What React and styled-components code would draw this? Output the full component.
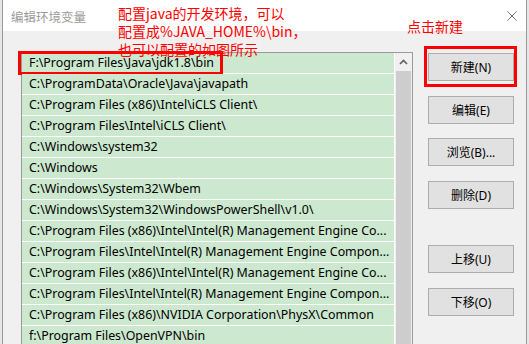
import styled, { createGlobalStyle } from 'styled-components'

const GlobalStyle = createGlobalStyle`
  html, body {
    margin: 0;
    padding: 0;
    background: #ececec;
    overflow: hidden;
  }
  body {
    font-family: 'Noto Sans', 'Noto Sans CJK SC', sans-serif;
  }
`

const paths = [
  'F:\\Program Files\\Java\\jdk1.8\\bin',
  'C:\\ProgramData\\Oracle\\Java\\javapath',
  'C:\\Program Files (x86)\\Intel\\iCLS Client\\',
  'C:\\Program Files\\Intel\\iCLS Client\\',
  'C:\\Windows\\system32',
  'C:\\Windows',
  'C:\\Windows\\System32\\Wbem',
  'C:\\Windows\\System32\\WindowsPowerShell\\v1.0\\',
  'C:\\Program Files (x86)\\Intel\\Intel(R) Management Engine Co...',
  'C:\\Program Files\\Intel\\Intel(R) Management Engine Compon...',
  'C:\\Program Files (x86)\\Intel\\Intel(R) Management Engine Co...',
  'C:\\Program Files\\Intel\\Intel(R) Management Engine Compon...',
  'C:\\Program Files (x86)\\NVIDIA Corporation\\PhysX\\Common',
  'f:\\Program Files\\OpenVPN\\bin',
]

const buttons = [
  { label: '新建(N)', marked: true },
  { label: '编辑(E)' },
  { label: '浏览(B)...' },
  { label: '删除(D)' },
  { label: '上移(U)', spaced: true },
  { label: '下移(O)' },
]

const App = () => {
  return (
    <>
      <GlobalStyle />
      <Desktop>
        <Strip $width={2} />
        <Dialog>
          <TitleBar>
            <Title>编辑环境变量</Title>
            <CloseIcon viewBox="0 0 10 10">
              <path d="M0.5 0.5 L9.5 9.5 M9.5 0.5 L0.5 9.5" />
            </CloseIcon>
          </TitleBar>
          <Body>
            <ListBox>
              <Rows>
                {paths.map((p, i) => (
                  <Row key={i} $marked={i === 0}>
                    {p}
                  </Row>
                ))}
              </Rows>
              <ScrollBar>
                <ScrollButton>
                  <svg width="9" height="6" viewBox="0 0 9 6">
                    <path d="M1 5 L4.5 1.5 L8 5" fill="none" stroke="#606060" strokeWidth="1.6" />
                  </svg>
                </ScrollButton>
                <Thumb />
              </ScrollBar>
            </ListBox>
            <ButtonColumn>
              {buttons.map((b) => (
                <Button key={b.label} $marked={b.marked} $spaced={b.spaced}>
                  {b.label}
                </Button>
              ))}
            </ButtonColumn>
          </Body>
          <Note>
            配置java的开发环境，可以
            <br />
            配置成%JAVA_HOME%\bin，
            <br />
            也可以配置的如图所示
          </Note>
          <Hint>点击新建</Hint>
        </Dialog>
        <Strip $width={2} />
      </Desktop>
    </>
  )
}

const Desktop = styled.div`
  display: flex;
  width: 529px;
  height: 344px;
`

const Strip = styled.div`
  width: ${(p) => p.$width}px;
  background: #e6e6e6;
`

const Dialog = styled.div`
  position: relative;
  flex: 1;
  display: flex;
  flex-direction: column;
  background: #f0f0f0;
  border-left: 1px solid #9a9a9a;
  border-right: 1px solid #9a9a9a;
`

const TitleBar = styled.div`
  height: 31px;
  flex-shrink: 0;
  display: flex;
  align-items: center;
  justify-content: space-between;
  padding: 0 9px 0 8px;
  background: #ffffff;
`

const Title = styled.span`
  font-size: 12.5px;
  color: #9c9c9c;
  font-family: 'Noto Sans CJK SC', sans-serif;
  margin-top: 1px;
`

const CloseIcon = styled.svg`
  width: 10px;
  height: 10px;
  stroke: #7a7a7a;
  stroke-width: 1;
  fill: none;
  margin-top: 1px;
`

const Body = styled.div`
  display: flex;
  padding: 21px 0 0 18px;
  gap: 15px;
`

const ListBox = styled.div`
  width: 390px;
  height: 300px;
  display: flex;
  border: 1px solid #9a9a9a;
  border-bottom: none;
  background: #ffffff;
`

const Rows = styled.div`
  flex: 1;
  display: flex;
  flex-direction: column;
  min-width: 0;
`

const Row = styled.div`
  position: relative;
  height: 20px;
  line-height: 20px;
  flex-shrink: 0;
  padding-left: 7px;
  border-bottom: 1px solid #ffffff;
  background: #cce8cf;
  color: #000000;
  font-size: 12.4px;
  white-space: nowrap;
  overflow: ${(p) => (p.$marked ? 'visible' : 'hidden')};

  &::after {
    content: '';
    display: ${(p) => (p.$marked ? 'block' : 'none')};
    position: absolute;
    left: -4px;
    top: -2px;
    width: 199px;
    height: 18px;
    border: 3px solid #ff0000;
  }
`

const ScrollBar = styled.div`
  width: 17px;
  margin-left: 1px;
  display: flex;
  flex-direction: column;
  background: #f0f0f0;
`

const ScrollButton = styled.div`
  height: 18px;
  display: flex;
  align-items: center;
  justify-content: center;
`

const Thumb = styled.div`
  flex: 1;
  margin: 0 1px;
  background: #cdcdcd;
`

const ButtonColumn = styled.div`
  display: flex;
  flex-direction: column;
  gap: 14.5px;
  padding-top: 1px;
`

const Button = styled.div`
  position: relative;
  box-sizing: border-box;
  width: 86px;
  height: 28px;
  margin-top: ${(p) => (p.$spaced ? '22px' : '0')};
  display: flex;
  align-items: center;
  justify-content: center;
  background: #e1e1e1;
  border: 1px solid #adadad;
  font-size: 12px;
  color: #000000;

  &::after {
    content: '';
    display: ${(p) => (p.$marked ? 'block' : 'none')};
    position: absolute;
    inset: -8px -4px -7px -5px;
    border: 3px solid #ff0000;
  }
`

const Note = styled.div`
  position: absolute;
  left: 115px;
  top: 4px;
  font-family: 'Noto Sans CJK SC', sans-serif;
  font-size: 14px;
  line-height: 18px;
  color: #ff0000;
  white-space: nowrap;
`

const Hint = styled.div`
  position: absolute;
  left: 404px;
  top: 17px;
  font-family: 'Noto Sans CJK SC', sans-serif;
  font-size: 14px;
  line-height: 18px;
  color: #ff0000;
`

export default App
